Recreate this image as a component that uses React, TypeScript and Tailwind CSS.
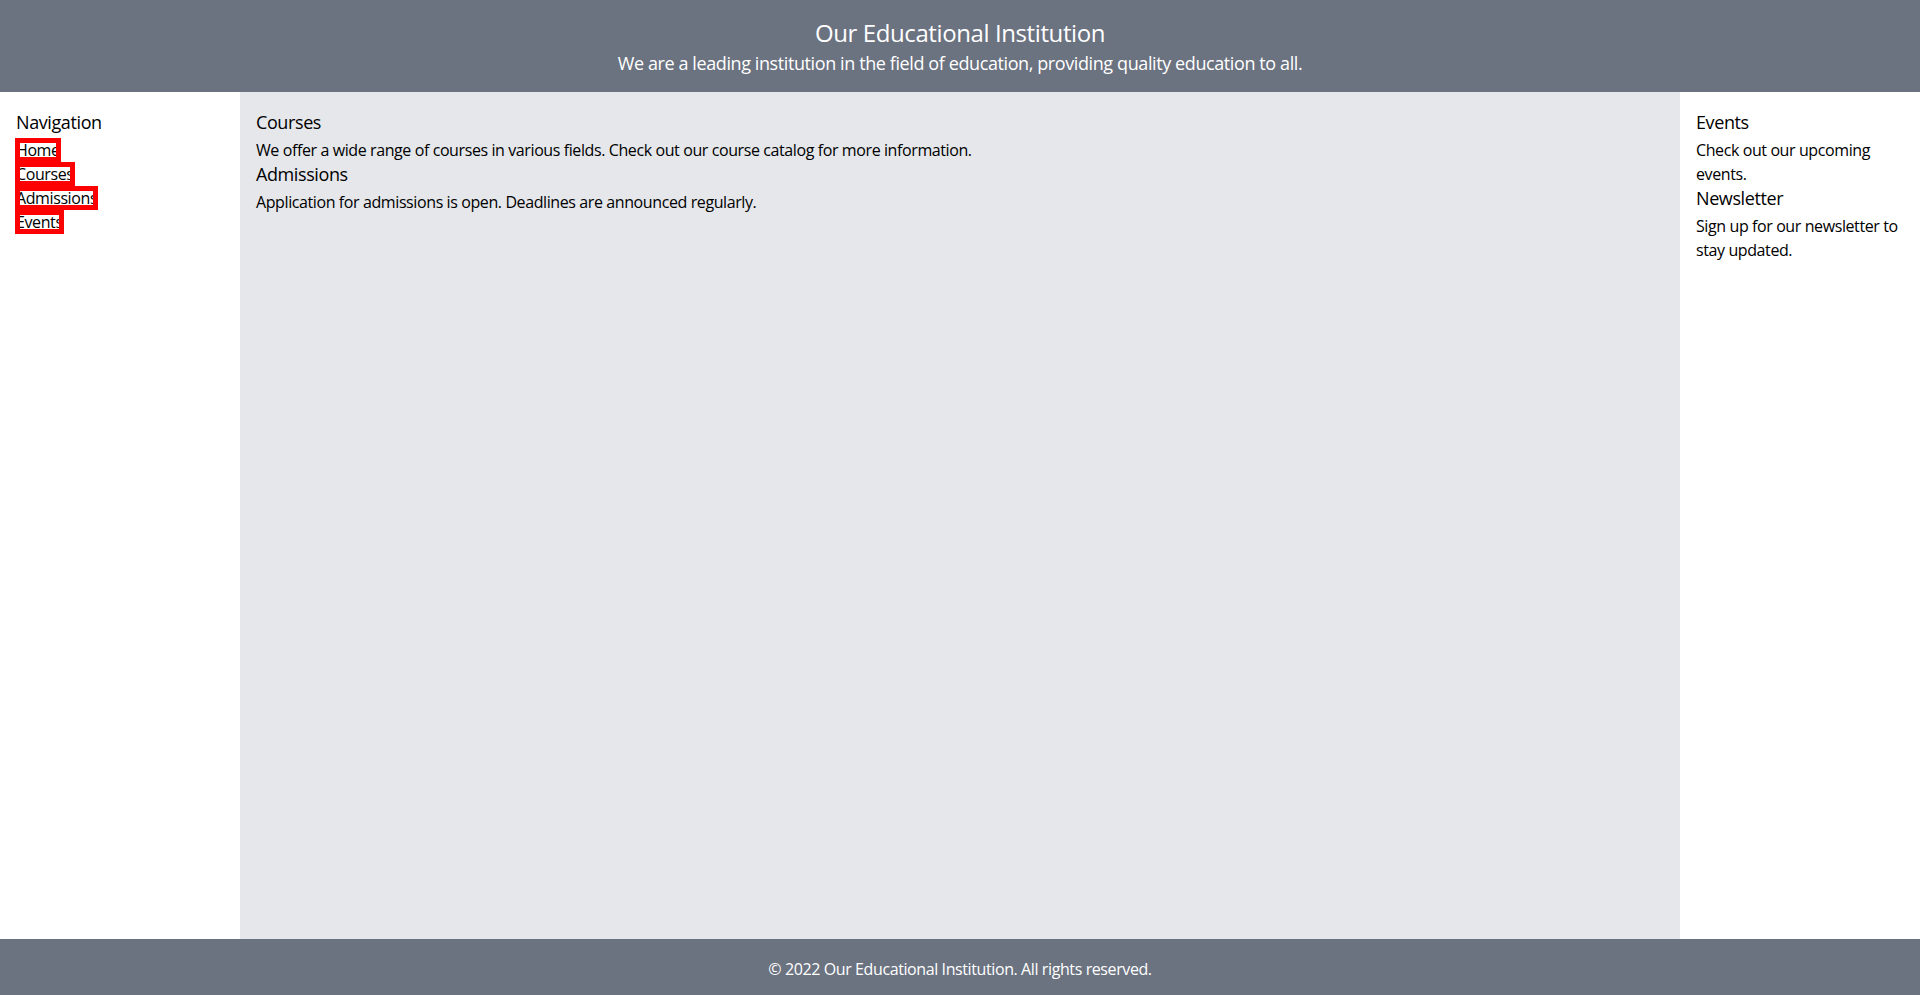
import React from "react";

export default function App() {
  return (
    <div className="flex min-h-screen flex-col text-black tracking-[-0.025em]" style={{ fontFamily: '"Open Sans", "Noto Sans", sans-serif' }}>
      <header className="bg-[#6b7280] px-4 pt-[17px] pb-[15px] text-center text-white">
        <h1 className="text-2xl">Our Educational Institution</h1>
        <p className="text-lg">We are a leading institution in the field of education, providing quality education to all.</p>
      </header>
      <div className="flex flex-1">
        <aside className="w-[240px] shrink-0 bg-white p-4">
          <h2 className="text-lg">Navigation</h2>
          <ul className="pt-[2px]">
            {["Home", "Courses", "Admissions", "Events"].map((l) => (
              <li key={l}>
                <a href="#" className="outline-[5px] outline-[#ff0000] outline-offset-[-4px] outline-solid">
                  {l}
                </a>
              </li>
            ))}
          </ul>
        </aside>
        <main className="flex-1 bg-[#e5e7eb] p-4">
          <h2 className="text-lg">Courses</h2>
          <p className="pt-[2px] -mb-[2px]">We offer a wide range of courses in various fields. Check out our course catalog for more information.</p>
          <h2 className="text-lg">Admissions</h2>
          <p className="pt-[2px] -mb-[2px]">Application for admissions is open. Deadlines are announced regularly.</p>
        </main>
        <aside className="w-[240px] shrink-0 bg-white p-4">
          <h2 className="text-lg">Events</h2>
          <p className="pt-[2px] -mb-[2px]">Check out our upcoming events.</p>
          <h2 className="text-lg">Newsletter</h2>
          <p className="pt-[2px] -mb-[2px]">Sign up for our newsletter to stay updated.</p>
        </aside>
      </div>
      <footer className="bg-[#6b7280] px-4 pt-[18px] pb-[14px] text-center text-white">
        <p>© 2022 Our Educational Institution. All rights reserved.</p>
      </footer>
    </div>
  );
}
